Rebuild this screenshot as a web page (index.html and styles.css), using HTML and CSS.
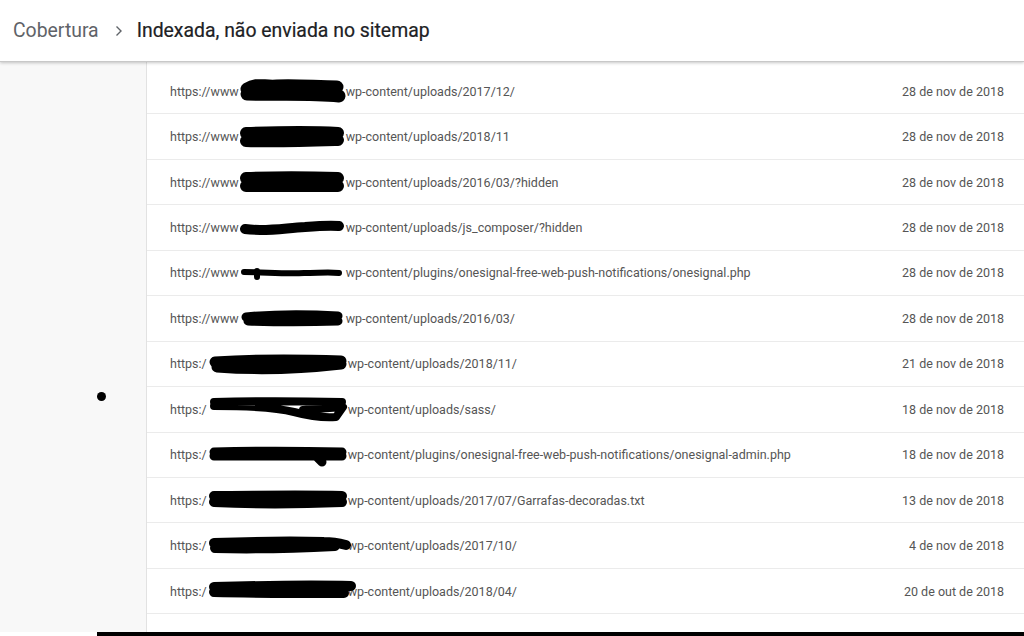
FILE: index.html
```html
<!DOCTYPE html>
<html lang="pt-BR">
<head>
    <meta charset="UTF-8">
    <meta name="viewport" content="width=device-width, initial-scale=1.0">
    <title>Cobertura - Indexada, não enviada no sitemap</title>
    <link rel="stylesheet" href="styles.css">
</head>
<body>
    <header class="topbar">
        <span class="crumb">Cobertura</span>
        <svg class="chevron" width="8" height="12" viewBox="0 0 8 12"><path d="M1.5 1.5 6 6l-4.5 4.5" fill="none" stroke="#5f6368" stroke-width="1.4"/></svg>
        <h1 class="page-title">Indexada, não enviada no sitemap</h1>
    </header>
    <div class="layout">
        <aside class="sidebar">
            <span class="dot"></span>
        </aside>
        <main class="panel">
            <ul class="url-list">
                <li class="url-row">
                    <span class="url"><span>https://www</span><svg class="mark" width="107" height="28" viewBox="0 0 107 28"><path d="M8 12c10-6 16-2 30-3 20-1 40 1 60 1M8 17c30 1 60-1 92 2" stroke="#000" stroke-width="13" stroke-linecap="round" fill="none"/></svg><span>wp-content/uploads/2017/12/</span></span>
                    <span class="date">28 de nov de 2018</span>
                </li>
                <li class="url-row">
                    <span class="url"><span>https://www</span><svg class="mark" width="107" height="28" viewBox="0 0 107 28"><path d="M7 10c30-1 60-2 92 0M7 18c30 1 60 0 92-1" stroke="#000" stroke-width="12" stroke-linecap="round" fill="none"/></svg><span>wp-content/uploads/2018/11</span></span>
                    <span class="date">28 de nov de 2018</span>
                </li>
                <li class="url-row">
                    <span class="url"><span>https://www</span><svg class="mark" width="107" height="28" viewBox="0 0 107 28"><path d="M7 10c30-1 60-1 92 0M7 18c30 0 60 0 92 0" stroke="#000" stroke-width="12" stroke-linecap="round" fill="none"/></svg><span>wp-content/uploads/2016/03/?hidden</span></span>
                    <span class="date">28 de nov de 2018</span>
                </li>
                <li class="url-row">
                    <span class="url"><span>https://www</span><svg class="mark" width="107" height="28" viewBox="0 0 107 28"><path d="M6 15c20 3 40-1 60-2 12-1 25-2 34-1" stroke="#000" stroke-width="10" stroke-linecap="round" fill="none"/></svg><span>wp-content/uploads/js_composer/?hidden</span></span>
                    <span class="date">28 de nov de 2018</span>
                </li>
                <li class="url-row">
                    <span class="url"><span>https://www</span><svg class="mark" width="107" height="28" viewBox="0 0 107 28"><path d="M5 13c20 0 40 2 60 1 14 0 25-1 35 0M18 12v6" stroke="#000" stroke-width="6" stroke-linecap="round" fill="none"/></svg><span>wp-content/plugins/onesignal-free-web-push-notifications/onesignal.php</span></span>
                    <span class="date">28 de nov de 2018</span>
                </li>
                <li class="url-row">
                    <span class="url"><span>https://www</span><svg class="mark" width="107" height="28" viewBox="0 0 107 28"><path d="M7 13c30-3 60-3 92-1M9 17c30 1 60 1 90 0" stroke="#000" stroke-width="9" stroke-linecap="round" fill="none"/></svg><span>wp-content/uploads/2016/03/</span></span>
                    <span class="date">28 de nov de 2018</span>
                </li>
                <li class="url-row">
                    <span class="url"><span>https:/</span><svg class="mark" width="141" height="28" viewBox="0 0 141 28"><path d="M8 12c30-2 70-3 126-1M10 17c40 3 80 2 124-3" stroke="#000" stroke-width="11" stroke-linecap="round" fill="none"/></svg><span>wp-content/uploads/2018/11/</span></span>
                    <span class="date">21 de nov de 2018</span>
                </li>
                <li class="url-row">
                    <span class="url"><span>https:/</span><svg class="mark" width="141" height="30" viewBox="0 0 141 30"><path d="M7 8c40-1 80-1 128 0M7 12c30 0 60 1 80 6 15 4 30 6 42 5l7-10-40 3" stroke="#000" stroke-width="8" stroke-linecap="round" stroke-linejoin="round" fill="none"/></svg><span>wp-content/uploads/sass/</span></span>
                    <span class="date">18 de nov de 2018</span>
                </li>
                <li class="url-row">
                    <span class="url"><span>https:/</span><svg class="mark" width="141" height="28" viewBox="0 0 141 28"><path d="M7 11c40-1 80-1 128 0M7 15c40 0 80 0 128 0M110 16l5 5" stroke="#000" stroke-width="9" stroke-linecap="round" fill="none"/></svg><span>wp-content/plugins/onesignal-free-web-push-notifications/onesignal-admin.php</span></span>
                    <span class="date">18 de nov de 2018</span>
                </li>
                <li class="url-row">
                    <span class="url"><span>https:/</span><svg class="mark" width="141" height="28" viewBox="0 0 141 28"><path d="M7 10c40 0 80-1 128 0M7 16c40 2 80 2 128 0" stroke="#000" stroke-width="10" stroke-linecap="round" fill="none"/></svg><span>wp-content/uploads/2017/07/Garrafas-decoradas.txt</span></span>
                    <span class="date">13 de nov de 2018</span>
                </li>
                <li class="url-row">
                    <span class="url"><span>https:/</span><svg class="mark mark-over-s" width="145" height="28" viewBox="0 0 145 28"><path d="M7 11c30-1 70-2 110-1 10 0 18 2 22 3M8 16c40 1 80 0 120-2" stroke="#000" stroke-width="10" stroke-linecap="round" fill="none"/></svg><span>wp-content/uploads/2017/10/</span></span>
                    <span class="date">4 de nov de 2018</span>
                </li>
                <li class="url-row">
                    <span class="url"><span>https:/</span><svg class="mark mark-over-l" width="150" height="28" viewBox="0 0 150 28"><path d="M7 10c40-1 90-2 137-1M7 15c40 1 90 1 130 1" stroke="#000" stroke-width="10" stroke-linecap="round" fill="none"/></svg><span>wp-content/uploads/2018/04/</span></span>
                    <span class="date">20 de out de 2018</span>
                </li>
            </ul>
        </main>
    </div>
    <div class="bottom-bar"></div>
</body>
</html>
```

FILE: styles.css
```css
html, body {
    height: 100%;
}
body {
    margin: 0;
    font-family: Roboto, "Liberation Sans", Arial, sans-serif;
    background: #fff;
    display: flex;
    flex-direction: column;
    overflow: hidden;
}
.topbar {
    height: 61px;
    flex: none;
    display: flex;
    align-items: center;
    padding-left: 13px;
    border-bottom: 1px solid #c8c8c8;
    box-shadow: 0 1px 3px rgba(0, 0, 0, 0.22);
    position: relative;
    z-index: 1;
    background: #fff;
}
.crumb {
    font-size: 19.4px;
    color: #5f6368;
}
.chevron {
    margin: 1px 14px 0 16px;
}
.page-title {
    margin: 0;
    font-size: 19.4px;
    font-weight: 400;
    color: #202124;
    -webkit-text-stroke: 0.2px #202124;
}
.layout {
    flex: 1;
    display: flex;
    min-height: 0;
}
.sidebar {
    width: 147px;
    flex: none;
    background: #f8f8f8;
    border-right: 1px solid #e2e2e2;
    box-sizing: border-box;
}
.dot {
    display: block;
    width: 9px;
    height: 9px;
    border-radius: 50%;
    background: #000;
    margin: 330px 0 0 97px;
}
.panel {
    flex: 1;
    background: #fff;
}
.url-list {
    list-style: none;
    margin: 0;
    padding: 7px 0 0;
}
.url-row {
    height: 44.45px;
    border-bottom: 1px solid #ebebeb;
    display: flex;
    align-items: center;
    justify-content: space-between;
    padding: 0 20px 0 23px;
    font-size: 12.5px;
    color: #555;
}
.url {
    display: flex;
    align-items: center;
    white-space: nowrap;
}
.mark {
    display: block;
    flex: none;
    position: relative;
}
.mark-over-s {
    margin-right: -4px;
}
.mark-over-l {
    margin-right: -9px;
}
.date {
    color: #555;
}
.bottom-bar {
    flex: none;
    height: 4px;
    margin-left: 97px;
    background: #000;
}
```
